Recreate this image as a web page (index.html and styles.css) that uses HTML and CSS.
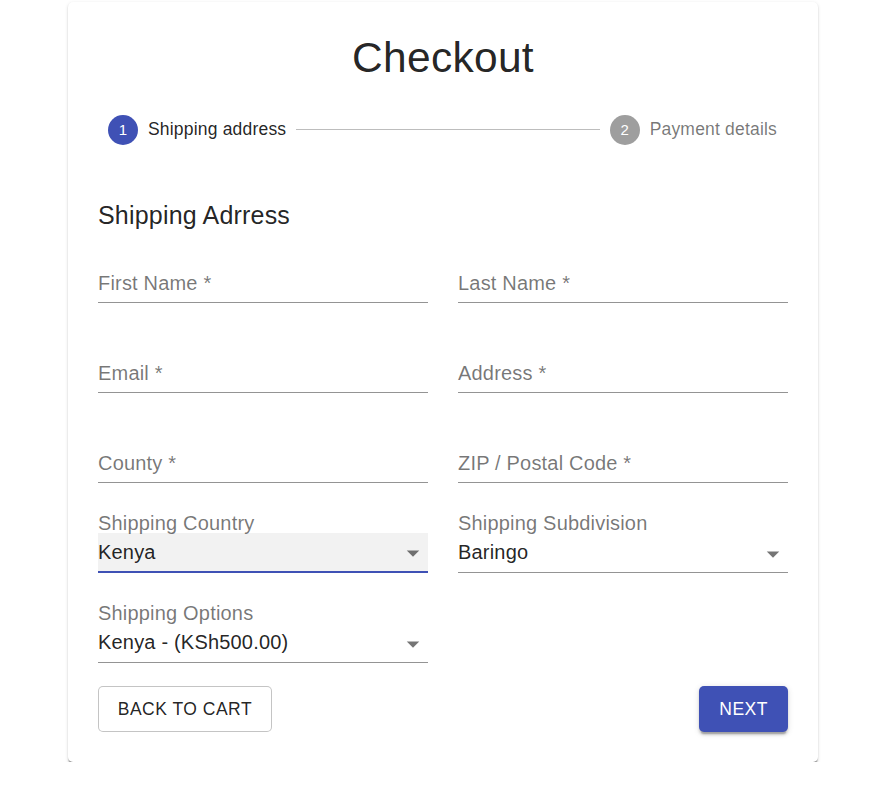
FILE: index.html
```html
<!DOCTYPE html>
<html lang="en">
<head>
<meta charset="utf-8">
<title>Checkout</title>
<link rel="stylesheet" href="styles.css">
</head>
<body>
<main class="paper">
  <h1 class="title">Checkout</h1>
  <div class="stepper">
    <div class="step">
      <span class="step-icon active">1</span>
      <span class="step-label active">Shipping address</span>
    </div>
    <div class="connector"></div>
    <div class="step step-last">
      <span class="step-icon">2</span>
      <span class="step-label">Payment details</span>
    </div>
  </div>
  <h2 class="section-title">Shipping Adrress</h2>
  <form class="grid">
    <div class="text-field"><span class="placeholder">First Name *</span></div>
    <div class="text-field"><span class="placeholder">Last Name *</span></div>
    <div class="text-field"><span class="placeholder">Email *</span></div>
    <div class="text-field"><span class="placeholder">Address *</span></div>
    <div class="text-field"><span class="placeholder">County *</span></div>
    <div class="text-field"><span class="placeholder">ZIP / Postal Code *</span></div>
    <div class="select-field">
      <div class="select-label">Shipping Country</div>
      <div class="select focused">Kenya
        <svg class="arrow" viewBox="0 0 24 24"><path d="M7 10l5 5 5-5z"/></svg>
      </div>
    </div>
    <div class="select-field">
      <div class="select-label">Shipping Subdivision</div>
      <div class="select">Baringo
        <svg class="arrow" viewBox="0 0 24 24"><path d="M7 10l5 5 5-5z"/></svg>
      </div>
    </div>
    <div class="select-field">
      <div class="select-label">Shipping Options</div>
      <div class="select">Kenya - (KSh500.00)
        <svg class="arrow" viewBox="0 0 24 24"><path d="M7 10l5 5 5-5z"/></svg>
      </div>
    </div>
  </form>
  <div class="actions">
    <button class="btn btn-outline" type="button">Back to cart</button>
    <button class="btn btn-primary" type="button">Next</button>
  </div>
</main>
</body>
</html>
```
FILE: styles.css
```css
* { box-sizing: border-box; }
html, body { margin: 0; padding: 0; background: #fff; }
body {
  font-family: "Liberation Sans", Arial, Helvetica, sans-serif;
  color: rgba(0, 0, 0, 0.87);
}
.paper {
  width: 750px;
  margin: 2px 0 0 68px;
  padding: 30px;
  background: #fff;
  border-radius: 5px;
  box-shadow: 0 2.5px 1.25px -1.25px rgba(0,0,0,0.25), 0 1.25px 1.25px 0 rgba(0,0,0,0.16), 0 1.25px 3.75px 0 rgba(0,0,0,0.12);
}
.title {
  margin: 0;
  text-align: center;
  font-size: 42.5px;
  line-height: 52.5px;
  font-weight: 400;
  letter-spacing: 0.3px;
}
.stepper {
  display: flex;
  align-items: center;
  padding: 30px 0 50px;
}
.step {
  display: flex;
  align-items: center;
  padding: 0 10px;
}
.step-last { padding-right: 11px; }
.step-icon {
  width: 30px;
  height: 30px;
  border-radius: 50%;
  background: #9e9e9e;
  color: #fff;
  font-size: 15px;
  display: flex;
  align-items: center;
  justify-content: center;
  margin-right: 10px;
}
.step-icon.active { background: #3f51b5; }
.step-label {
  font-size: 17.5px;
  line-height: 25px;
  letter-spacing: 0.19px;
  color: rgba(0, 0, 0, 0.54);
}
.step-label.active { color: rgba(0, 0, 0, 0.87); }
.connector {
  flex: 1;
  border-top: 1px solid #bdbdbd;
}
.section-title {
  margin: 0 0 8.75px;
  font-size: 25px;
  line-height: 40px;
  font-weight: 400;
  letter-spacing: 0.19px;
}
.grid {
  display: grid;
  grid-template-columns: 1fr 1fr;
  column-gap: 30px;
  row-gap: 30px;
  margin: 0;
}
.text-field {
  margin-top: 20px;
  height: 40px;
  padding: 8.5px 0 7.75px;
  border-bottom: 1px solid rgba(0, 0, 0, 0.42);
  font-size: 20px;
  line-height: 23.75px;
  letter-spacing: 0.19px;
}
.placeholder { color: rgba(0, 0, 0, 0.54); }
.select-label {
  font-size: 20px;
  line-height: 20px;
  letter-spacing: 0.19px;
  color: rgba(0, 0, 0, 0.54);
}
.select {
  position: relative;
  height: 40px;
  padding: 7.5px 30px 8.75px 0;
  border-bottom: 1px solid rgba(0, 0, 0, 0.42);
  font-size: 20px;
  line-height: 23.75px;
  letter-spacing: 0.19px;
  color: rgba(0, 0, 0, 0.87);
}
.select.focused {
  background: rgba(0, 0, 0, 0.05);
  border-bottom: 2px solid #3f51b5;
}
.arrow {
  position: absolute;
  right: 0;
  top: calc(50% - 14px);
  width: 30px;
  height: 30px;
  fill: rgba(0, 0, 0, 0.54);
}
.actions {
  display: flex;
  justify-content: space-between;
  margin-top: 23px;
}
.btn {
  height: 46px;
  font-family: "Liberation Sans", Arial, Helvetica, sans-serif;
  font-size: 17.5px;
  letter-spacing: 0.5px;
  text-transform: uppercase;
  border-radius: 5px;
  cursor: pointer;
}
.btn-outline {
  padding: 0 18.75px;
  background: #fff;
  border: 1px solid rgba(0, 0, 0, 0.23);
  color: rgba(0, 0, 0, 0.87);
}
.btn-primary {
  padding: 0 20px;
  background: #3f51b5;
  border: none;
  color: #fff;
  box-shadow: 0 3.75px 1.25px -2.5px rgba(0,0,0,0.2), 0 2.5px 2.5px 0 rgba(0,0,0,0.14), 0 1.25px 6.25px 0 rgba(0,0,0,0.12);
}
```
